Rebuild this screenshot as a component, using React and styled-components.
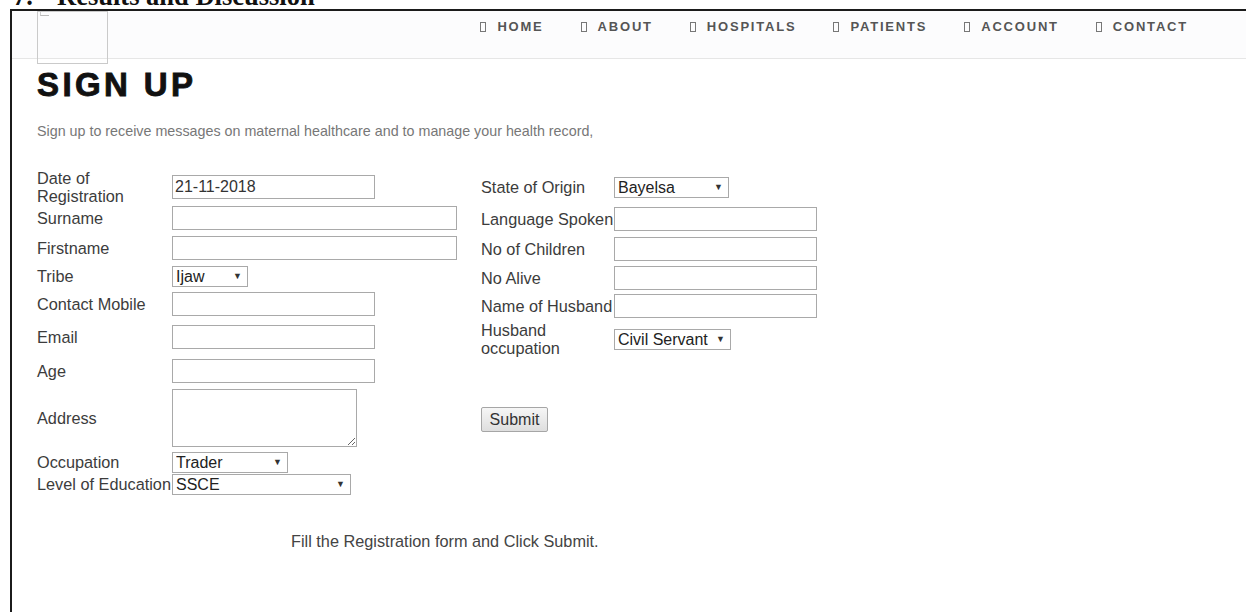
import styled, { createGlobalStyle } from 'styled-components';

const GlobalStyle = createGlobalStyle`
  html, body {
    margin: 0;
    padding: 0;
    background: #fff;
  }
  body {
    font-family: "Liberation Sans", Arial, sans-serif;
    overflow: hidden;
  }
`;

const Caption = styled.div`
  height: 9px;
  overflow: hidden;
  display: flex;
  align-items: flex-end;
  padding-left: 13px;
  font: bold 26.5px/26px "Liberation Serif", "Times New Roman", serif;
  color: #111;
  white-space: nowrap;
`;

const CaptionNum = styled.span`
  display: inline-block;
  width: 44px;
`;

const Frame = styled.div`
  margin: 0 1px 0 10px;
  min-height: 603px;
  border-top: 2px solid #1b1b1b;
  border-left: 2px solid #1b1b1b;
  box-sizing: border-box;
`;

const Header = styled.header`
  display: flex;
  align-items: flex-start;
  height: 47px;
  padding: 0 58px 0 25px;
  background: #fcfcfd;
  border-bottom: 1px solid #e6e6e6;
`;

const Logo = styled.div`
  position: relative;
  flex-shrink: 0;
  width: 71px;
  height: 53px;
  box-sizing: border-box;
  border: 1px solid #cacaca;
`;

const BrokenImage = styled.span`
  position: absolute;
  top: 0;
  left: 2px;
  width: 8px;
  height: 3px;
  border-bottom: 1px solid #bbb;
  border-left: 1px solid #ccc;
`;

const Nav = styled.nav`
  margin-left: auto;
  display: flex;
  gap: 37px;
  padding-top: 6px;
`;

const NavItem = styled.a`
  display: flex;
  align-items: center;
  font-weight: bold;
  font-size: 13px;
  line-height: 20px;
  letter-spacing: 1.8px;
  color: #555;
  text-decoration: none;
`;

const Glyph = styled.span`
  display: inline-block;
  width: 6px;
  height: 10px;
  box-sizing: border-box;
  border: 1px solid #777;
  margin-right: 11px;
`;

const Main = styled.main`
  padding-left: 25px;
`;

const Title = styled.h1`
  margin: 9px 0 0;
  font-family: "Liberation Sans", Arial, sans-serif;
  font-weight: 900;
  font-size: 33px;
  line-height: 33px;
  letter-spacing: 3.4px;
  color: #111;
  -webkit-text-stroke: 0.9px #111;
`;

const Lead = styled.p`
  margin: 22px 0 0;
  font-size: 14.3px;
  line-height: 16px;
  color: #777;
`;

const FormGrid = styled.form`
  display: flex;
  align-items: flex-start;
  gap: 24px;
  margin-top: 30px;
`;

const Column = styled.div`
  width: ${p => p.$w}px;
`;

const Row = styled.div`
  display: grid;
  grid-template-columns: ${p => p.$label}px auto;
  align-items: center;
  justify-items: start;
  height: ${p => p.$h}px;
  margin-top: ${p => p.$mt || 0}px;
`;

const Label = styled.label`
  font-size: 16.3px;
  line-height: 18px;
  color: #3c3c3c;
  white-space: nowrap;
`;

const TextInput = styled.input`
  width: ${p => p.$w}px;
  height: 24px;
  box-sizing: border-box;
  margin: 0;
  padding: 1px 2px;
  border: 1px solid #a9a9a9;
  font-family: "Liberation Sans", Arial, sans-serif;
  font-size: 16px;
  color: #333;
  background: #fff;
`;

const TextArea = styled.textarea`
  width: 185px;
  height: 58px;
  box-sizing: border-box;
  margin: 0;
  border: 1px solid #a9a9a9;
  font-family: "Liberation Sans", Arial, sans-serif;
  font-size: 14px;
`;

const SelectWrap = styled.span`
  position: relative;
  display: inline-block;
  line-height: 0;
`;

const Select = styled.select`
  appearance: none;
  width: ${p => p.$w}px;
  height: 21px;
  box-sizing: border-box;
  margin: 0;
  padding: 0 14px 0 3px;
  border: 1px solid #a9a9a9;
  border-radius: 0;
  background: #fff;
  font-family: "Liberation Sans", Arial, sans-serif;
  font-size: 16px;
  color: #222;
`;

const Arrow = styled.span`
  position: absolute;
  right: 6px;
  top: 50%;
  transform: translateY(-50%);
  font-size: 9px;
  line-height: 9px;
  color: #333;
  pointer-events: none;
`;

const Submit = styled.button`
  margin-top: 50px;
  width: 67px;
  height: 25px;
  padding: 0;
  border: 1px solid #a6a6a6;
  border-radius: 2px;
  background: linear-gradient(#f6f6f6, #dedede);
  font-family: "Liberation Sans", Arial, sans-serif;
  font-size: 16px;
  color: #333;
`;

const Note = styled.p`
  margin: 37px 0 0 254px;
  font-size: 16.3px;
  line-height: 18px;
  color: #444;
`;

const navLinks = ['HOME', 'ABOUT', 'HOSPITALS', 'PATIENTS', 'ACCOUNT', 'CONTACT'];

const leftFields = [
  { label: ['Date of', 'Registration'], h: 36, type: 'input', w: 203, value: '21-11-2018' },
  { label: 'Surname', h: 26, type: 'input', w: 285 },
  { label: 'Firstname', h: 34, type: 'input', w: 285 },
  { label: 'Tribe', h: 22, type: 'select', w: 76, value: 'Ijaw' },
  { label: 'Contact Mobile', h: 34, type: 'input', w: 203 },
  { label: 'Email', h: 32, type: 'input', w: 203 },
  { label: 'Age', h: 36, type: 'input', w: 203 },
  { label: 'Address', h: 58, type: 'textarea' },
  { label: 'Occupation', h: 22, mt: 4, type: 'select', w: 116, value: 'Trader' },
  { label: 'Level of Education', h: 22, type: 'select', w: 179, value: 'SSCE' },
];

const rightFields = [
  { label: 'State of Origin', h: 36, type: 'select', w: 115, value: 'Bayelsa' },
  { label: 'Language Spoken', h: 28, type: 'input', w: 203 },
  { label: 'No of Children', h: 32, type: 'input', w: 203 },
  { label: 'No Alive', h: 26, type: 'input', w: 203 },
  { label: 'Name of Husband', h: 30, type: 'input', w: 203 },
  { label: ['Husband', 'occupation'], h: 36, type: 'select', w: 117, value: 'Civil Servant' },
];

function Control({ field }) {
  if (field.type === 'textarea') return <TextArea />;
  if (field.type === 'select') {
    return (
      <SelectWrap>
        <Select $w={field.w} defaultValue={field.value}>
          <option value={field.value}>{field.value}</option>
        </Select>
        <Arrow>▼</Arrow>
      </SelectWrap>
    );
  }
  return <TextInput $w={field.w} defaultValue={field.value || ''} />;
}

function FieldRow({ field, labelWidth }) {
  const text = Array.isArray(field.label)
    ? field.label.map((line, i) => <span key={i}>{i > 0 && <br />}{line}</span>)
    : field.label;
  return (
    <Row $label={labelWidth} $h={field.h} $mt={field.mt}>
      <Label>{text}</Label>
      <Control field={field} />
    </Row>
  );
}

export default function App() {
  return (
    <>
      <GlobalStyle />
      <Caption>
        <CaptionNum>7.</CaptionNum>
        Results and Discussion
      </Caption>
      <Frame>
        <Header>
          <Logo>
            <BrokenImage />
          </Logo>
          <Nav>
            {navLinks.map(link => (
              <NavItem key={link} href="#">
                <Glyph />
                {link}
              </NavItem>
            ))}
          </Nav>
        </Header>
        <Main>
          <Title>SIGN UP</Title>
          <Lead>Sign up to receive messages on maternal healthcare and to manage your health record,</Lead>
          <FormGrid onSubmit={e => e.preventDefault()}>
            <Column $w={420}>
              {leftFields.map((f, i) => (
                <FieldRow key={i} field={f} labelWidth={135} />
              ))}
            </Column>
            <Column $w={336}>
              {rightFields.map((f, i) => (
                <FieldRow key={i} field={f} labelWidth={133} />
              ))}
              <Submit type="submit">Submit</Submit>
            </Column>
          </FormGrid>
          <Note>Fill the Registration form and Click Submit.</Note>
        </Main>
      </Frame>
    </>
  );
}
